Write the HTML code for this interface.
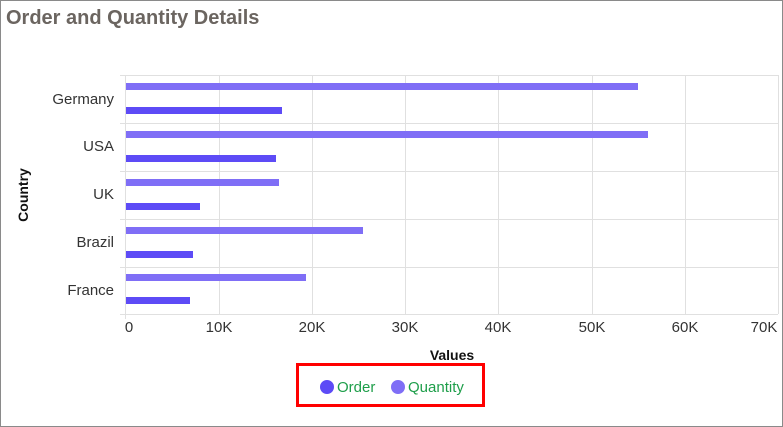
<!DOCTYPE html><html><head><style>
body{margin:0;width:783px;height:427px;overflow:hidden;background:#fff;font-family:"Liberation Sans",sans-serif}
.frame{position:absolute;left:0;top:0;width:781px;height:425px;border:1px solid #8a8a8a}
.t{position:absolute;white-space:nowrap}
</style></head><body><div class="frame"></div>
<div class="t" style="left:6px;top:7px;font-size:20px;font-weight:bold;color:#6b6560">Order and Quantity Details</div>
<svg width="783" height="427" style="position:absolute;left:0;top:0">
<g stroke="#e0e0e0" stroke-width="1">
<line x1="219.5" y1="75" x2="219.5" y2="314"/><line x1="312.5" y1="75" x2="312.5" y2="314"/><line x1="405.5" y1="75" x2="405.5" y2="314"/><line x1="498.5" y1="75" x2="498.5" y2="314"/><line x1="592.5" y1="75" x2="592.5" y2="314"/><line x1="685.5" y1="75" x2="685.5" y2="314"/><line x1="778.5" y1="75" x2="778.5" y2="314"/>
<line x1="120" y1="75.5" x2="778" y2="75.5"/><line x1="120" y1="123.5" x2="778" y2="123.5"/><line x1="120" y1="171.5" x2="778" y2="171.5"/><line x1="120" y1="219.5" x2="778" y2="219.5"/><line x1="120" y1="267.5" x2="778" y2="267.5"/><line x1="120" y1="314.5" x2="778" y2="314.5"/>
<line x1="125.5" y1="75" x2="125.5" y2="319"/>
</g>
<g fill="#7f6ef6">
<rect x="126" y="83" width="512" height="7"/><rect x="126" y="131" width="522" height="7"/><rect x="126" y="179" width="153" height="7"/><rect x="126" y="227" width="237" height="7"/><rect x="126" y="274" width="180" height="7"/>
</g>
<g fill="#5d4bf6">
<rect x="126" y="107" width="156" height="7"/><rect x="126" y="155" width="150" height="7"/><rect x="126" y="203" width="74" height="7"/><rect x="126" y="251" width="67" height="7"/><rect x="126" y="297" width="64" height="7"/>
</g>
<g font-size="15" fill="#333" font-family="Liberation Sans" text-anchor="end">
<text x="114" y="104">Germany</text><text x="114" y="151">USA</text><text x="114" y="199">UK</text><text x="114" y="247">Brazil</text><text x="114" y="295">France</text>
</g>
<g font-size="15" fill="#333" font-family="Liberation Sans" text-anchor="middle">
<text x="129" y="332">0</text><text x="219" y="332">10K</text><text x="312" y="332">20K</text><text x="405" y="332">30K</text><text x="498" y="332">40K</text><text x="592" y="332">50K</text><text x="685" y="332">60K</text><text x="764" y="332">70K</text>
</g>
<text x="452" y="360" font-size="14" font-weight="bold" text-anchor="middle" fill="#111" font-family="Liberation Sans">Values</text>
<text transform="translate(28,195) rotate(-90)" font-size="14" font-weight="bold" text-anchor="middle" fill="#111" font-family="Liberation Sans">Country</text>
<rect x="297.5" y="364.5" width="186" height="41" fill="none" stroke="#f00" stroke-width="3"/>
<circle cx="327" cy="387" r="7" fill="#5d4bf6"/><circle cx="398" cy="387" r="7" fill="#7f6ef6"/>
<text x="337" y="392" font-size="15" fill="#1e9e4a" font-family="Liberation Sans">Order</text>
<text x="408" y="392" font-size="15" fill="#1e9e4a" font-family="Liberation Sans">Quantity</text>
</svg>
</body></html>
